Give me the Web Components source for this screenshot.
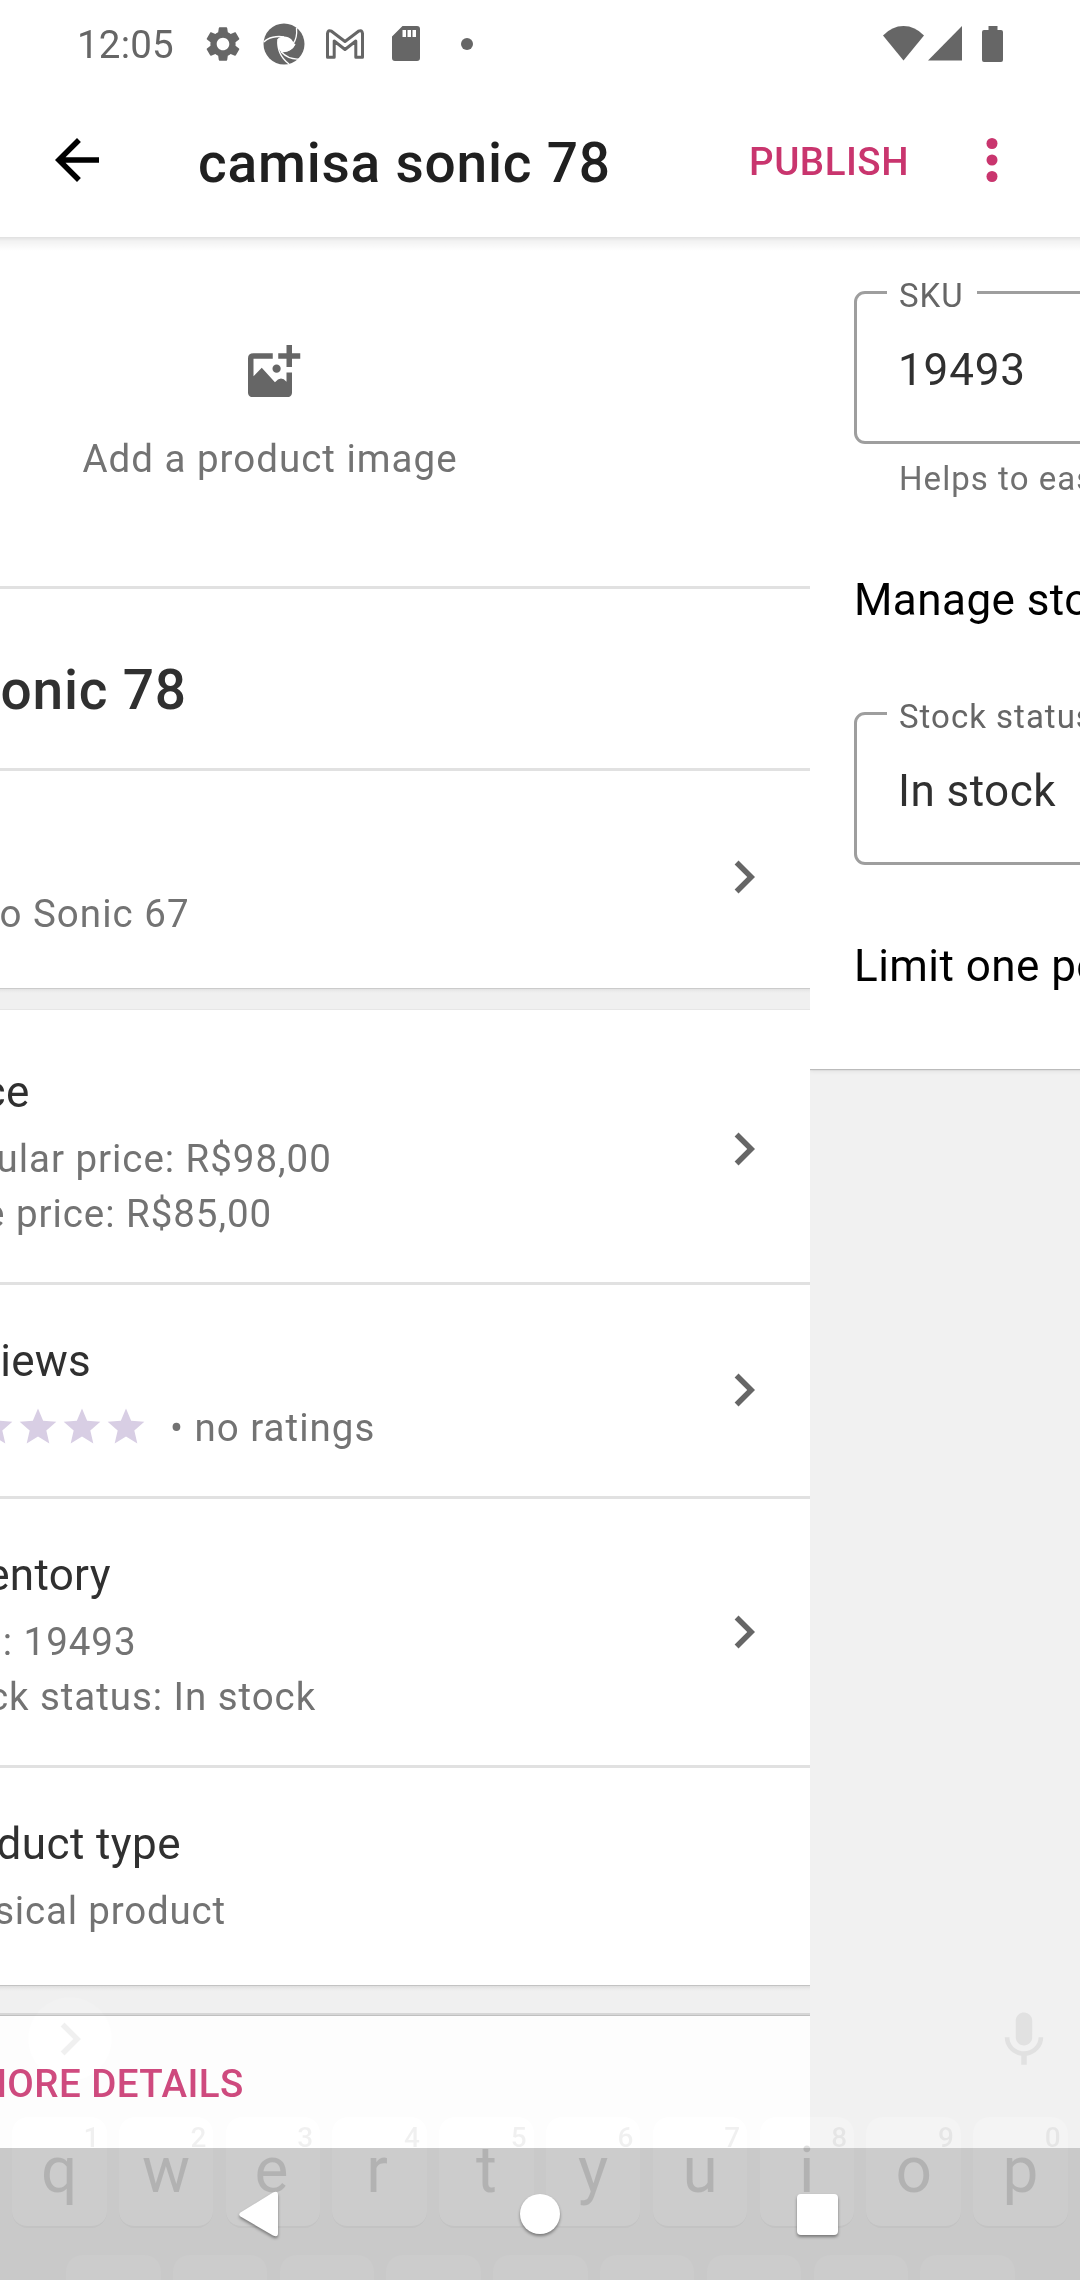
<!DOCTYPE html>
<html lang="en">
<head>
<meta charset="utf-8">
<title>camisa sonic 78</title>
<style>
html,body{margin:0;padding:0;background:#fff}
body{width:1080px;height:2280px;overflow:hidden;font-family:Roboto,"Noto Sans",sans-serif}
</style>
</head>
<body>
<product-screen></product-screen>
<script>
const define = (name, html) => {
  const t = document.createElement('template');
  t.innerHTML = html;
  customElements.define(name, class extends HTMLElement {
    constructor() {
      super();
      this.attachShadow({mode: 'open'}).append(t.content.cloneNode(true));
    }
  });
};

define('status-bar', `<style>
:host{display:flex;align-items:center;height:88px;box-sizing:border-box;padding:0 77px 1px 77px;color:#666;font-size:38.5px}
svg{display:block;flex:none;fill:currentColor}
.time{width:125px;line-height:46px;letter-spacing:.2px;padding-top:3px}
.end{margin-left:auto;display:flex;align-items:center}
</style>
<span class="time">12:05</span>
<svg width="42" height="42" viewBox="0 0 24 24"><path d="M19.14 12.94c.04-.3.06-.61.06-.94 0-.32-.02-.64-.07-.94l2.03-1.58c.18-.14.23-.41.12-.61l-1.92-3.32c-.12-.22-.37-.29-.59-.22l-2.39.96c-.5-.38-1.03-.7-1.62-.94l-.36-2.54c-.04-.24-.24-.41-.48-.41h-3.84c-.24 0-.43.17-.47.41l-.36 2.54c-.59.24-1.13.57-1.62.94l-2.39-.96c-.22-.08-.47 0-.59.22L2.74 8.87c-.12.21-.08.47.12.61l2.03 1.58c-.05.3-.09.63-.09.94s.02.64.07.94l-2.03 1.58c-.18.14-.23.41-.12.61l1.92 3.32c.12.22.37.29.59.22l2.39-.96c.5.38 1.03.7 1.62.94l.36 2.54c.05.24.24.41.48.41h3.84c.24 0 .44-.17.47-.41l.36-2.54c.59-.24 1.13-.56 1.62-.94l2.39.96c.22.08.47 0 .59-.22l1.92-3.32c.12-.22.07-.47-.12-.61l-2.01-1.58zM12 15.6c-1.98 0-3.6-1.62-3.6-3.6s1.62-3.6 3.6-3.6 3.6 1.62 3.6 3.6-1.62 3.6-3.6 3.6z"/></svg>
<svg width="42" height="42" viewBox="0 0 42 42" style="margin-left:19px"><circle cx="21" cy="21" r="20.5"/><path fill="#fff" d="M15 15.500C19 12.500 25 13 28.500 16.500L32 21.500C31 24 28 27 24.500 28.500L18 29C14.500 25.500 14 20 15 15.500z"/><g fill="none" stroke="#fff" stroke-width="1.300"><path d="M1 19C5 14.500 14 12.500 21 14"/><path d="M33.500 5C34 10 33 17 30 21"/><path d="M32 21C30 25.500 25 28.500 18 29"/><path d="M15 16C14 26 18 35 26 41"/><path d="M18 28.800C23 34 29 36.500 36 36"/></g></svg>
<svg width="38" height="30" viewBox="0 0 38 30" style="margin-left:21px"><path fill="none" stroke="currentColor" stroke-width="3" stroke-linejoin="round" d="M1.500 28.200V4.500Q2 .5 5.500 2.200L19 12.500 32.500 2.200Q36 .5 36.500 4.500V28.200H29.800V12L19 20.500 8.200 12V28.200Z"/></svg>
<svg width="28" height="35" viewBox="0 0 28 35" style="margin-left:28px"><path fill-rule="evenodd" d="M10.500 0H25q3 0 3 3V32q0 3-3 3H3q-3 0-3-3V10.500zM10.500 4v7h3.500V4zM15.500 4v7h3.500V4zM20.500 4v7H24V4z"/></svg>
<svg width="12" height="12" viewBox="0 0 12 12" style="margin-left:41px"><circle cx="6" cy="6" r="6"/></svg>
<div class="end">
<svg width="41" height="35" viewBox="0 0 41 35"><path d="M0 9.500Q9 0 20.500 0T41 9.500L20.500 34.500z"/></svg>
<svg width="34" height="35" viewBox="0 0 34 35" style="margin-left:4px"><path d="M34 0V34.500H0z"/></svg>
<svg width="21" height="36" viewBox="0 0 21 36" style="margin-left:20px"><path d="M6.500 0h9v4H19q2 0 2 2V34q0 2-2 2H2q-2 0-2-2V6q0-2 2-2h4.500z"/></svg>
</div>`);

define('app-toolbar', `<style>
:host{display:flex;align-items:center;height:149px;box-sizing:border-box;padding:0 55px 5px 44px;background:#fff}
svg{display:block;flex:none}
.title{margin-left:88px;font-size:55px;font-weight:500;line-height:64px;letter-spacing:.79px;color:#202020;padding-top:6px;white-space:nowrap}
.action{margin-left:auto;margin-right:50px;font-size:38.5px;font-weight:500;line-height:46px;letter-spacing:.5px;color:#c9356e;padding-top:3px}
</style>
<svg width="66" height="66" viewBox="0 0 24 24"><path d="M20 11H7.830l5.590-5.590L12 4l-8 8 8 8 1.410-1.410L7.830 13H20v-2z"/></svg>
<span class="title"><slot></slot></span>
<span class="action"><slot name="action"></slot></span>
<svg width="66" height="66" viewBox="0 0 24 24" fill="#c9356e"><circle cx="12" cy="6" r="2"/><circle cx="12" cy="12" r="2"/><circle cx="12" cy="18" r="2"/></svg>`);

define('image-placeholder', `<style>
:host{display:flex;flex-direction:column;align-items:center;height:349px;box-sizing:border-box;padding-top:108px;font-size:38.5px;letter-spacing:1px;line-height:46px;color:#737373}
svg{display:block;margin:0 0 39px 9px}
</style>
<svg width="52.25" height="52.25" viewBox="0 0 19 19" fill="#666"><path fill-rule="evenodd" d="M2 3H9V5H2V11.400L5 8.300 9.800 13.500Q12 11 14 13.400V10H16V17.200Q16 19 14.200 19H1.800Q0 19 0 17.200V4.800Q0 3 2 3z"/><circle cx="10.400" cy="8.600" r="1.500"/><path d="M14 0h2v3h3v2h-3v3h-2V5h-3V3h3z"/></svg>
<span><slot></slot></span>`);

define('product-name', `<style>
:host{display:block;height:179px;box-sizing:border-box;padding:69px 44px 0;font-size:55px;font-weight:500;line-height:64px;letter-spacing:.79px;color:#303030;white-space:nowrap}
</style><slot></slot>`);

define('pane-divider', `<style>:host{display:block;height:3px;background:#e1e1e1}</style>`);

define('property-row', `<style>
:host{display:flex;box-sizing:border-box;height:var(--h);padding:var(--top,50px) 33px 0 var(--inset,198px);color:#737373;font-size:38.5px;letter-spacing:var(--tracking,.95px);line-height:55px;white-space:nowrap}
.text{flex:1;display:flex;flex-direction:column}
.label{font-size:44px;line-height:52px;letter-spacing:var(--label-tracking,.41px);color:#303030;margin-bottom:13px}
.chevron{width:66px;height:66px;flex:none;margin-top:var(--chevron,22px)}
:host([plain]) .chevron{display:none}
</style>
<div class="text"><span class="label"><slot name="label"></slot></span><slot></slot></div>
<svg class="chevron" viewBox="0 0 24 24" fill="#666"><path d="M10 6L8.590 7.410 13.170 12l-4.580 4.590L10 18l6-6z"/></svg>`);

define('star-rating', `<style>
:host{display:flex;align-items:center;height:55px}
svg{display:block;width:44px;height:44px;fill:#d8cee4;margin-bottom:4px}
span{margin-left:22px;letter-spacing:1px}
</style>
${'<svg viewBox="0 0 24 24"><path d="M12 17.770L18.180 21.500 16.540 14.470 22 9.740 14.810 9.130 12 2.500 9.190 9.130 2 9.740 7.460 14.470 5.820 21.500z"/></svg>'.repeat(5)}<span><slot></slot></span>`);

define('card-gap', `<style>
:host{display:block;height:var(--h,22px);background:linear-gradient(#cbcbcb 0 1px,#e2e2e2 1px,#ebebeb 3px,#f0f0f0 5px) no-repeat #f0f0f0;border-bottom:1px solid #e6e6e6;box-sizing:border-box}
:host([raised]){background:linear-gradient(#c3c3c3 0 1px,#dedede 1px,#ebebeb 4px,#f0f0f0 6px);border:0;box-shadow:inset 0 -1px #c0c0c0,inset 0 -3px #d6d6d6}
</style>`);

define('details-button', `<style>
:host{display:block;height:132px;box-sizing:border-box;padding:45px 44px 0 156px;background:#fdfdfd;font-size:38.5px;font-weight:500;line-height:46px;letter-spacing:.45px;color:#ce4a7e;white-space:nowrap}
</style><slot></slot>`);

define('product-pane', `<style>
:host{display:block;width:1080px;flex:none;margin-left:-270px;background:#fff}
</style>
<image-placeholder>Add a product image</image-placeholder>
<pane-divider></pane-divider>
<product-name>camisa sonic 78</product-name>
<pane-divider></pane-divider>
<property-row style="--h:217px;--inset:44px;--tracking:1.03px;--chevron:23px"><span slot="label">Description</span><span>Camisetas do Sonic 67</span></property-row>
<card-gap></card-gap>
<property-row style="--h:272px;--top:56px;--chevron:49.500px"><span slot="label">Price</span><span>Regular price: R$98,00</span><span>Sale price: R$85,00</span></property-row>
<pane-divider></pane-divider>
<property-row style="--h:211px;--label-tracking:.25px"><span slot="label">Reviews</span><star-rating>• no ratings</star-rating></property-row>
<pane-divider></pane-divider>
<property-row style="--h:266px;--chevron:49.500px;--label-tracking:.3px"><span slot="label">Inventory</span><span>SKU: 19493</span><span>Stock status: In stock</span></property-row>
<pane-divider></pane-divider>
<property-row plain style="--h:217px;--tracking:.82px"><span slot="label">Product type</span><span>Physical product</span></property-row>
<card-gap raised style="--h:31px"></card-gap>
<details-button>ADD MORE DETAILS</details-button>`);

define('outlined-field', `<style>
:host{display:block}
fieldset{box-sizing:border-box;height:173px;margin:0;padding:30px 41px 0;border:3px solid #9e9e9e;border-radius:11px;min-width:0}
legend{margin-left:-11px;padding:6px 13px 0 12px;height:37px;line-height:37px;font-size:33px;letter-spacing:1px;color:#666}
.value{font-size:44px;line-height:52px;letter-spacing:var(--value-tracking,.45px);color:#303030}
</style>
<fieldset><legend><slot name="label"></slot></legend><div class="value"><slot></slot></div></fieldset>`);

define('switch-row', `<style>
:host{display:block;font-size:44px;line-height:52px;letter-spacing:.45px;color:#000}
</style><slot></slot>`);

define('inventory-pane', `<style>
:host{display:block;width:1080px;flex:none;overflow:hidden;background:#f1f1f1;white-space:nowrap}
.card{box-sizing:border-box;height:832px;padding:34px 44px 0;background:#fff;box-shadow:0 1px 1px #bbb,0 2px 4px #ddd}
.help{padding-left:45px;margin-top:15px;font-size:33px;line-height:39px;letter-spacing:1.050px;color:#707070}
.manage{margin-top:76px}
.stock{margin-top:66px}
.limit{margin-top:75px}
</style>
<div class="card">
<outlined-field style="--value-tracking:.85px"><span slot="label">SKU</span>19493</outlined-field>
<div class="help">Helps to easily identify this product</div>
<switch-row class="manage">Manage stock</switch-row>
<outlined-field class="stock"><span slot="label">Stock status</span>In stock</outlined-field>
<switch-row class="limit">Limit one per order</switch-row>
</div>`);

define('keyboard-key', `<style>
:host{display:block;position:relative;width:94.500px;height:111px;box-sizing:border-box;border-radius:16px;background:#030303;mix-blend-mode:plus-lighter;box-shadow:none}
</style>`);

define('key-caption', `<style>
:host{display:flex;flex-direction:column;width:94.500px;height:111px;box-sizing:border-box;border-radius:16px;border-bottom:2px solid rgba(0,0,0,.045)}
.hint{height:31px;line-height:36px;padding-top:3px;box-sizing:border-box;padding-right:7px;text-align:right;font-size:28px;font-weight:500;color:rgba(0,0,0,.06)}
.letter{text-align:center;font-size:64px;line-height:64px;margin:-9px var(--nudge,0) 0 0;color:rgba(0,0,0,.125)}
</style><span class="hint"><slot name="hint"></slot></span><span class="letter"><slot></slot></span>`);

define('ghost-keyboard', `<style>
:host{position:absolute;left:0;right:0;top:1976px;height:304px;overflow:hidden}
.layer{position:absolute;left:12px;top:141px;display:flex;flex-direction:column;gap:27px}
.row{display:flex;gap:12.300px}
.second{padding-left:54px}
.round{position:absolute;left:28px;top:21px;width:84px;height:84px;border-radius:50%;background:#020202;mix-blend-mode:plus-lighter}
.next{position:absolute;left:37px;top:30px}
.mic{position:absolute;left:991px;top:30.500px}
</style>
<div class="round"></div>
<svg class="next" width="66" height="66" viewBox="0 0 24 24" fill="rgba(0,0,0,.06)"><path d="M10 6L8.590 7.410 13.170 12l-4.580 4.590L10 18l6-6z"/></svg>
<svg class="mic" width="66" height="66" viewBox="0 0 24 24" fill="#e1e1e1"><path d="M12 14c1.660 0 2.990-1.340 2.990-3L15 5c0-1.660-1.340-3-3-3S9 3.340 9 5v6c0 1.660 1.340 3 3 3zm5.300-3c0 3-2.540 5.100-5.300 5.100S6.700 14 6.700 11H5c0 3.410 2.720 6.230 6 6.720V21h2v-3.280c3.280-.48 6-3.300 6-6.720h-1.700z"/></svg>
<div class="layer"><div class="row">${'<keyboard-key></keyboard-key>'.repeat(10)}</div><div class="row second">${'<keyboard-key></keyboard-key>'.repeat(9)}</div></div>
<div class="layer"><div class="row">${[...'qwertyuiop'].map((c, i) => `<key-caption${c === 'e' ? ' style="--nudge:3px"' : c === 'r' ? ' style="--nudge:5px"' : ''}><span slot="hint">${(i + 1) % 10}</span>${c}</key-caption>`).join('')}</div></div>`);

define('navigation-bar', `<style>
:host{position:absolute;left:0;right:0;bottom:0;height:132px;display:flex;background:#c9c9c9}
:host([buttons]){background:none;align-items:center;justify-content:center;padding-right:3px}
:host(:not([buttons])) svg{display:none}
svg{display:block;flex:none;filter:drop-shadow(0 2px 1.500px rgba(0,0,0,.4))}
</style>
<svg width="39" height="46" viewBox="0 0 39 46" style="margin-right:242px" fill="#fff"><path d="M34 1.500Q39 -1 39 4V42Q39 47 34 44.500L1.500 25.500Q-1 23.500 1.500 21.500z"/></svg>
<svg width="40" height="40" viewBox="0 0 40 40" fill="#fff"><circle cx="20" cy="20" r="20"/></svg>
<svg width="41" height="41" viewBox="0 0 41 41" style="margin-left:237px" fill="#fff"><rect width="41" height="41" rx="4"/></svg>`);

define('product-screen', `<style>
:host{display:flex;flex-direction:column;position:relative;width:1080px;height:2280px;overflow:hidden;background:#fff}
.panes{display:flex;height:2043px;overflow:hidden}
.edge{height:14px;margin-bottom:-14px;position:relative;background:linear-gradient(rgba(0,0,0,.12),rgba(0,0,0,.05) 4px,rgba(0,0,0,0))}
</style>
<status-bar></status-bar>
<app-toolbar>camisa sonic 78<span slot="action">PUBLISH</span></app-toolbar>
<div class="edge"></div>
<div class="panes"><product-pane></product-pane><inventory-pane></inventory-pane></div>
<navigation-bar></navigation-bar>
<ghost-keyboard></ghost-keyboard>
<navigation-bar buttons></navigation-bar>`);
</script>
</body>
</html>
